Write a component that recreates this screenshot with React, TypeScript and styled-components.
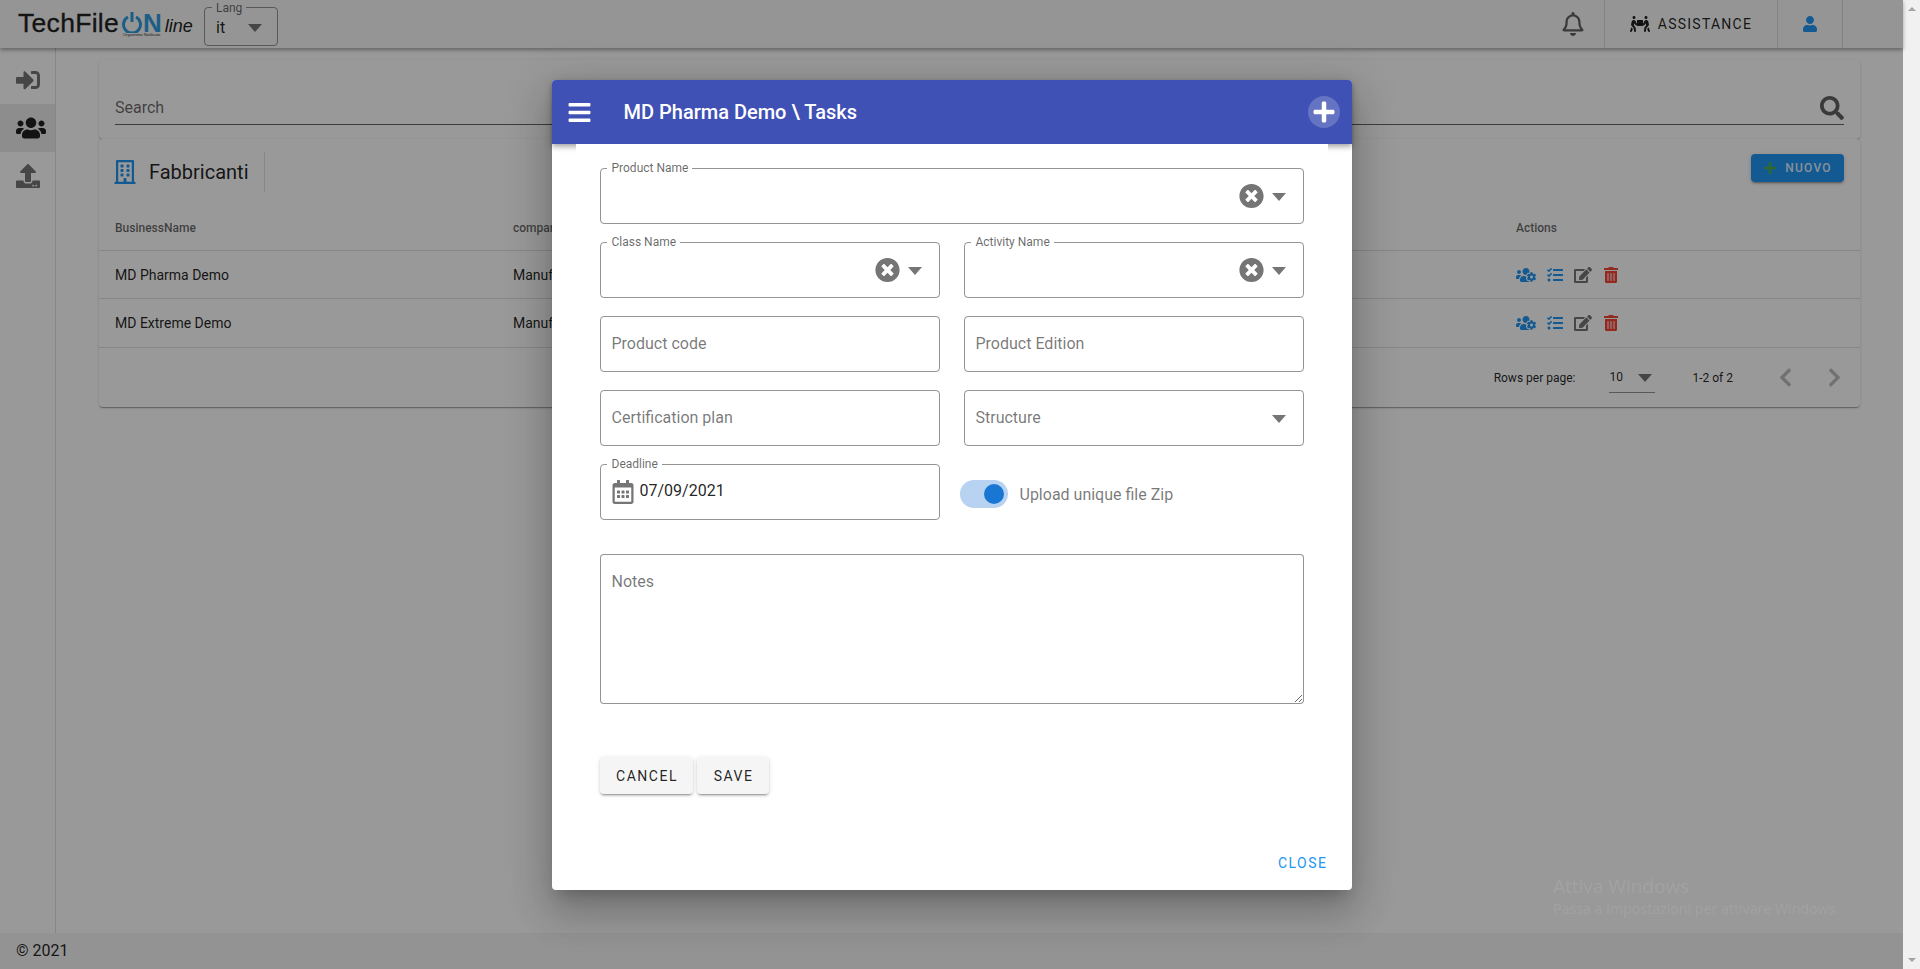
import React from 'react'
import styled, { createGlobalStyle } from 'styled-components'
import {
  FaBars,
  FaChevronLeft,
  FaChevronRight,
  FaEdit,
  FaPeopleCarry,
  FaPlus,
  FaRegBell,
  FaRegBuilding,
  FaRegCalendarAlt,
  FaSearch,
  FaSignInAlt,
  FaTasks,
  FaTimesCircle,
  FaTrashAlt,
  FaUpload,
  FaUser,
  FaUsers,
  FaUsersCog,
} from 'react-icons/fa'

const GlobalStyle = createGlobalStyle`
  html, body {
    margin: 0;
    height: 100%;
    overflow: hidden;
    background: #fff;
    font-family: Roboto, "Liberation Sans", sans-serif;
    color: rgba(0, 0, 0, 0.87);
  }
  * { box-sizing: border-box; }
`

const Screen = styled.div`
  display: flex;
  width: 1920px;
  height: 969px;
`

const Page = styled.div`
  position: relative;
  flex: 1;
  min-width: 0;
  display: flex;
  flex-direction: column;
`

const Scrollbar = styled.div`
  width: 17px;
  background: #f1f1f1;
  display: flex;
  flex-direction: column;
  justify-content: space-between;
  align-items: center;
  padding: 7px 0;
`

const ScrollArrow = styled.span<{ $down?: boolean }>`
  width: 0;
  height: 0;
  border-left: 4px solid transparent;
  border-right: 4px solid transparent;
  ${({ $down }) => ($down ? 'border-top: 4px solid #a3a3a3;' : 'border-bottom: 4px solid #a3a3a3;')}
`

/* top bar */
const TopBar = styled.header`
  position: relative;
  z-index: 2;
  flex: none;
  height: 48px;
  background: #f9f9f9;
  box-shadow: 0 2px 4px rgba(0, 0, 0, 0.35);
  display: flex;
  align-items: stretch;
  padding-left: 18px;
`

const Logo = styled.div`
  position: relative;
  width: 176px;
  display: flex;
  align-items: baseline;
  padding-top: 11px;
  white-space: nowrap;
`

const LogoTech = styled.span`
  font-family: "Liberation Sans", Arial, sans-serif;
  font-size: 26.5px;
  line-height: 24px;
  letter-spacing: 0.3px;
  color: #222;
  -webkit-text-stroke: 0.3px #222;
`

const LogoOn = styled.span`
  font-family: "Liberation Sans", Arial, sans-serif;
  font-size: 26px;
  font-weight: 700;
  line-height: 18px;
  color: #2f9fe0;
  margin-left: 1px;
`

const LogoLine = styled.span`
  font-family: "Liberation Sans", Arial, sans-serif;
  font-style: italic;
  font-size: 18px;
  line-height: 18px;
  color: #222;
  margin-left: 3px;
`

const PowerMark = styled.svg`
  width: 20px;
  height: 21px;
  margin-left: 3px;
  align-self: flex-start;
  margin-top: 1px;
`

const LogoSub = styled.span`
  position: absolute;
  left: 105px;
  top: 33px;
  font-family: "Liberation Sans", Arial, sans-serif;
  font-size: 4px;
  line-height: 4px;
  color: #333;
`

const LangBox = styled.div`
  position: relative;
  width: 74px;
  height: 39px;
  margin: 7px 0 0 10px;
  border: 1px solid rgba(0, 0, 0, 0.4);
  border-radius: 4px;
  padding: 10px 0 0 11px;
  font-size: 16px;
  line-height: 20px;
  color: rgba(0, 0, 0, 0.87);
`

const LangLabel = styled.span`
  position: absolute;
  left: 7px;
  top: -6px;
  padding: 0 4px;
  background: #f9f9f9;
  font-size: 12px;
  line-height: 13px;
  color: rgba(0, 0, 0, 0.6);
`

const Caret = styled.svg<{ $right: number; $top?: string }>`
  position: absolute;
  right: ${({ $right }) => $right}px;
  top: ${({ $top }) => $top || 'calc(50% + 1px)'};
  width: 14px;
  height: 8px;
  fill: #757575;
  transform: translateY(-50%);
`

const TopBarRight = styled.div`
  margin-left: auto;
  display: flex;
  align-items: stretch;
  padding-right: 60px;
`

const BarCell = styled.div<{ $width: number; $size?: number; $color?: string }>`
  width: ${({ $width }) => $width}px;
  display: flex;
  align-items: center;
  justify-content: center;
  gap: 8px;
  border-right: 1px solid rgba(0, 0, 0, 0.12);
  font-size: ${({ $size }) => $size || 14}px;
  letter-spacing: 1.25px;
  color: ${({ $color }) => $color || 'rgba(0, 0, 0, 0.87)'};
`

const Body = styled.div`
  flex: 1;
  min-height: 0;
  display: flex;
`

/* left rail */
const Rail = styled.nav`
  flex: none;
  width: 56px;
  padding-top: 8px;
  border-right: 1px solid rgba(0, 0, 0, 0.12);
`

const RailItem = styled.div<{ $active?: boolean }>`
  height: 48px;
  display: flex;
  align-items: center;
  padding-left: 16px;
  font-size: 24px;
  color: ${({ $active }) => ($active ? '#212121' : '#757575')};
  background: ${({ $active }) => ($active ? 'rgba(0, 0, 0, 0.08)' : 'transparent')};
`

const Content = styled.main`
  flex: 1;
  min-width: 0;
  padding: 12px 43px 0;
`

const Paper = styled.section`
  background: #fff;
  border-radius: 4px;
  box-shadow: 0 2px 1px -1px rgba(0, 0, 0, 0.2), 0 1px 1px 0 rgba(0, 0, 0, 0.14), 0 1px 3px 0 rgba(0, 0, 0, 0.12);
`

const SearchPaper = styled(Paper)`
  height: 79px;
  padding: 0 16px;
  display: flex;
  align-items: flex-start;
`

const SearchField = styled.div`
  width: 100%;
  height: 32px;
  margin-top: 33px;
  padding-bottom: 2px;
  border-bottom: 1px solid rgba(0, 0, 0, 0.6);
  display: flex;
  justify-content: space-between;
  align-items: center;
  font-size: 16px;
  color: rgba(0, 0, 0, 0.6);
`

const TablePaper = styled(Paper)`
  height: 268px;
`

const TitleBar = styled.div`
  height: 68px;
  padding: 13px 16px 0 14px;
  display: flex;
  align-items: flex-start;
  justify-content: space-between;
`

const Title = styled.div`
  display: flex;
  align-items: center;
  height: 40px;
  font-size: 20px;
  padding-right: 15px;
  border-right: 1px solid rgba(0, 0, 0, 0.12);
  color: rgba(0, 0, 0, 0.87);
  gap: 12px;
`

const NewButton = styled.button`
  width: 93px;
  height: 28px;
  margin-top: 2px;
  border: 0;
  border-radius: 4px;
  background: #2196f3;
  color: rgba(255, 255, 255, 0.87);
  font: 500 12px Roboto, sans-serif;
  letter-spacing: 1.25px;
  display: flex;
  align-items: center;
  justify-content: center;
  gap: 8px;
  box-shadow: 0 3px 1px -2px rgba(0, 0, 0, 0.2), 0 2px 2px 0 rgba(0, 0, 0, 0.14), 0 1px 5px 0 rgba(0, 0, 0, 0.12);
`

const Row = styled.div<{ $height: number; $head?: boolean }>`
  height: ${({ $height }) => $height}px;
  display: grid;
  grid-template-columns: 398px 1003px 1fr;
  align-items: center;
  padding: ${({ $head }) => ($head ? '0 0 2px 16px' : '0 0 0 16px')};
  border-bottom: 1px solid rgba(0, 0, 0, 0.12);
  font-size: ${({ $head }) => ($head ? '12px' : '14px')};
  font-weight: ${({ $head }) => ($head ? 500 : 400)};
  color: ${({ $head }) => ($head ? 'rgba(0, 0, 0, 0.6)' : 'rgba(0, 0, 0, 0.87)')};
`

const Actions = styled.div`
  display: flex;
  align-items: center;
  gap: 11px;
`

const ActionIcon = styled.span<{ $color: string; $size: number }>`
  display: flex;
  color: ${({ $color }) => $color};
  font-size: ${({ $size }) => $size}px;
`

const Pager = styled.div`
  height: 59px;
  display: flex;
  align-items: center;
  justify-content: flex-end;
  font-size: 12px;
  color: rgba(0, 0, 0, 0.87);
`

const PageSize = styled.div`
  position: relative;
  width: 46px;
  height: 30px;
  margin: 0 37px 0 34px;
  line-height: 28px;
  border-bottom: 1px solid rgba(0, 0, 0, 0.42);
`

const PagerArrow = styled.span<{ $gap: number }>`
  display: flex;
  margin-left: ${({ $gap }) => $gap}px;
  font-size: 21px;
  color: rgba(0, 0, 0, 0.26);
`

const PagerEnd = styled.span`
  width: 15px;
`

const SiteFooter = styled.footer`
  position: absolute;
  left: 0;
  right: 0;
  bottom: 0;
  height: 36px;
  background: #f5f5f5;
  display: flex;
  align-items: center;
  padding: 0 0 2px 16px;
  font-size: 16px;
  color: rgba(0, 0, 0, 0.87);
`

/* dialog */
const Backdrop = styled.div`
  position: absolute;
  inset: 0;
  z-index: 10;
  background: rgba(0, 0, 0, 0.4);
  display: flex;
  justify-content: center;
  align-items: flex-start;
  padding-top: 80px;
`

const Dialog = styled.div`
  width: 800px;
  height: 810px;
  display: flex;
  flex-direction: column;
  background: #fff;
  border-radius: 4px;
  box-shadow: 0 11px 15px -7px rgba(0, 0, 0, 0.2), 0 24px 38px 3px rgba(0, 0, 0, 0.14), 0 9px 46px 8px rgba(0, 0, 0, 0.12);
`

const DialogBar = styled.div`
  flex: none;
  height: 64px;
  background: #3f51b5;
  border-radius: 4px 4px 0 0;
  color: #fff;
  display: flex;
  align-items: center;
  padding: 0 12px 0 15px;
  font-size: 20px;
  font-weight: 500;
  box-shadow: 0 2px 4px -1px rgba(0, 0, 0, 0.2), 0 4px 5px 0 rgba(0, 0, 0, 0.14), 0 1px 10px 0 rgba(0, 0, 0, 0.12);
`

const DialogTitle = styled.span`
  margin-left: 32px;
  flex: 1;
`

const PlusWrap = styled.span`
  width: 32px;
  height: 32px;
  border-radius: 50%;
  background: rgba(255, 255, 255, 0.2);
  display: flex;
  align-items: center;
  justify-content: center;
  font-size: 24px;
`

const DialogContent = styled.div`
  position: relative;
  flex: 1;
  margin: 0 24px;
  padding: 24px 24px 0;
  background: #fff;
`

const FormGrid = styled.div`
  display: grid;
  grid-template-columns: 340px 340px;
  column-gap: 24px;
  row-gap: 18px;
`

const Field = styled.div<{ $wide?: boolean }>`
  position: relative;
  height: 56px;
  grid-column: ${({ $wide }) => ($wide ? '1 / 3' : 'auto')};
  border: 1px solid rgba(0, 0, 0, 0.42);
  border-radius: 4px;
  display: flex;
  align-items: center;
  padding: 0 0 2px 11px;
  font-size: 16px;
  color: rgba(0, 0, 0, 0.54);
`

const FieldLabel = styled.span`
  position: absolute;
  left: 6px;
  top: -8px;
  padding: 0 4px 0 5px;
  background: #fff;
  font-size: 12px;
  line-height: 14px;
  color: rgba(0, 0, 0, 0.6);
`

const ClearIcon = styled.span`
  position: absolute;
  right: 39px;
  top: 50%;
  transform: translateY(-50%);
  display: flex;
  font-size: 25px;
  color: #757575;
`

const DateValue = styled.span`
  display: flex;
  align-items: center;
  gap: 5px;
  margin-top: -1px;
  color: rgba(0, 0, 0, 0.87);
`

const CalendarIcon = styled.span`
  display: flex;
  font-size: 24px;
  color: #757575;
  margin-top: 3px;
  margin-left: -1px;
`

const SwitchRow = styled.div`
  display: flex;
  align-items: center;
  margin-left: -4px;
  margin-top: 4px;
  gap: 12px;
  font-size: 16px;
  color: rgba(0, 0, 0, 0.54);
`

const SwitchTrack = styled.span`
  width: 48px;
  height: 28px;
  border-radius: 14px;
  background: #b7d3f1;
  display: flex;
  align-items: center;
  justify-content: flex-end;
  padding-right: 4px;
`

const SwitchThumb = styled.span`
  width: 20px;
  height: 20px;
  border-radius: 50%;
  background: #1976d2;
`

const Notes = styled.textarea`
  display: block;
  width: 704px;
  height: 150px;
  margin-top: 34px;
  padding: 17px 11px;
  border: 1px solid rgba(0, 0, 0, 0.42);
  border-radius: 4px;
  outline: none;
  resize: vertical;
  font: 400 16px Roboto, sans-serif;
  &::placeholder {
    color: rgba(0, 0, 0, 0.54);
    opacity: 1;
  }
`

const FormButtons = styled.div`
  display: flex;
  gap: 4px;
  margin-top: 53px;
`

const FormButton = styled.button<{ $width: number }>`
  width: ${({ $width }) => $width}px;
  height: 37px;
  padding: 0 0 0 2px;
  border: 0;
  border-radius: 4px;
  background: #f5f5f5;
  color: rgba(0, 0, 0, 0.87);
  font: 400 14px Roboto, sans-serif;
  letter-spacing: 1.5px;
  box-shadow: 0 3px 1px -2px rgba(0, 0, 0, 0.2), 0 2px 2px 0 rgba(0, 0, 0, 0.14), 0 1px 5px 0 rgba(0, 0, 0, 0.12);
`

const CloseButton = styled.span`
  position: absolute;
  right: 0;
  bottom: 19px;
  font-size: 14px;
  font-weight: 400;
  letter-spacing: 1.5px;
  color: #2196f3;
`

/* windows activation text, sits on top of everything */
const Watermark = styled.div`
  position: absolute;
  z-index: 20;
  left: 1553px;
  top: 873px;
  font-family: "Open Sans", sans-serif;
  color: rgba(255, 255, 255, 0.1);
  pointer-events: none;
  white-space: nowrap;
`

const WatermarkTitle = styled.div`
  font-size: 19px;
  line-height: 26px;
`

const WatermarkText = styled.div`
  font-size: 14.2px;
  line-height: 20px;
`

const ArrowDown: React.FC<{ right: number; top?: string }> = ({ right, top }) => (
  <Caret $right={right} $top={top} viewBox="0 0 14 8">
    <polygon points="0,0 14,0 7,8" />
  </Caret>
)

const TableRowActions = () => (
  <Actions>
    <ActionIcon $color="#2196f3" $size={20}><FaUsersCog /></ActionIcon>
    <ActionIcon $color="#2196f3" $size={16}><FaTasks /></ActionIcon>
    <ActionIcon $color="#757575" $size={18}><FaEdit /></ActionIcon>
    <ActionIcon $color="#f44336" $size={16}><FaTrashAlt /></ActionIcon>
  </Actions>
)

const rows = ['MD Pharma Demo', 'MD Extreme Demo']

const App: React.FC = () => (
  <Screen>
    <GlobalStyle />
    <Page>
      <TopBar>
        <Logo>
          <LogoTech>TechFile</LogoTech>
          <PowerMark viewBox="0 0 20 21" fill="none" stroke="#2f9fe0" strokeWidth="3">
            <path d="M6 5a8.5 8.5 0 1 0 8 0" />
            <path d="M10 0v10" />
          </PowerMark>
          <LogoOn>N</LogoOn>
          <LogoLine>line</LogoLine>
          <LogoSub>Organismo Notificato</LogoSub>
        </Logo>
        <LangBox>
          <LangLabel>Lang</LangLabel>
          it
          <ArrowDown right={15} top="20px" />
        </LangBox>
        <TopBarRight>
          <BarCell $width={64} $size={24} $color="#616161"><FaRegBell /></BarCell>
          <BarCell $width={173}>
            <FaPeopleCarry size={20} />
            ASSISTANCE
          </BarCell>
          <BarCell $width={65} $size={16} $color="#2196f3"><FaUser /></BarCell>
        </TopBarRight>
      </TopBar>
      <Body>
        <Rail>
          <RailItem><FaSignInAlt /></RailItem>
          <RailItem $active><FaUsers size={30} /></RailItem>
          <RailItem><FaUpload /></RailItem>
        </Rail>
        <Content>
          <SearchPaper>
            <SearchField>
              Search
              <FaSearch size={24} color="#616161" />
            </SearchField>
          </SearchPaper>
          <TablePaper>
            <TitleBar>
              <Title>
                <FaRegBuilding size={24} color="#2196f3" />
                Fabbricanti
              </Title>
              <NewButton>
                <FaPlus size={14} color="#4caf50" />
                NUOVO
              </NewButton>
            </TitleBar>
            <Row $head $height={44}>
              <span>BusinessName</span>
              <span>companyType</span>
              <span>Actions</span>
            </Row>
            {rows.map((name) => (
              <Row key={name} $height={name === rows[0] ? 48 : 49}>
                <span>{name}</span>
                <span>Manufacturer</span>
                <TableRowActions />
              </Row>
            ))}
            <Pager>
              Rows per page:
              <PageSize>
                10
                <ArrowDown right={3} top="15px" />
              </PageSize>
              1-2 of 2
              <PagerArrow $gap={42}><FaChevronLeft /></PagerArrow>
              <PagerArrow $gap={28}><FaChevronRight /></PagerArrow>
              <PagerEnd />
            </Pager>
          </TablePaper>
        </Content>
      </Body>
      <SiteFooter>© 2021</SiteFooter>
      <Backdrop>
        <Dialog>
          <DialogBar>
            <FaBars size={25} />
            <DialogTitle>MD Pharma Demo \ Tasks</DialogTitle>
            <PlusWrap><FaPlus /></PlusWrap>
          </DialogBar>
          <DialogContent>
            <FormGrid>
              <Field $wide>
                <FieldLabel>Product Name</FieldLabel>
                <ClearIcon><FaTimesCircle /></ClearIcon>
                <ArrowDown right={17} />
              </Field>
              <Field>
                <FieldLabel>Class Name</FieldLabel>
                <ClearIcon><FaTimesCircle /></ClearIcon>
                <ArrowDown right={17} />
              </Field>
              <Field>
                <FieldLabel>Activity Name</FieldLabel>
                <ClearIcon><FaTimesCircle /></ClearIcon>
                <ArrowDown right={17} />
              </Field>
              <Field>Product code</Field>
              <Field>Product Edition</Field>
              <Field>Certification plan</Field>
              <Field>
                Structure
                <ArrowDown right={17} />
              </Field>
              <Field>
                <FieldLabel>Deadline</FieldLabel>
                <DateValue>
                  <CalendarIcon><FaRegCalendarAlt /></CalendarIcon>
                  07/09/2021
                </DateValue>
              </Field>
              <SwitchRow>
                <SwitchTrack><SwitchThumb /></SwitchTrack>
                Upload unique file Zip
              </SwitchRow>
            </FormGrid>
            <Notes placeholder="Notes" readOnly />
            <FormButtons>
              <FormButton $width={93}>CANCEL</FormButton>
              <FormButton $width={72}>SAVE</FormButton>
            </FormButtons>
            <CloseButton>CLOSE</CloseButton>
          </DialogContent>
        </Dialog>
      </Backdrop>
      <Watermark>
        <WatermarkTitle>Attiva Windows</WatermarkTitle>
        <WatermarkText>Passa a Impostazioni per attivare Windows.</WatermarkText>
      </Watermark>
    </Page>
    <Scrollbar>
      <ScrollArrow />
      <ScrollArrow $down />
    </Scrollbar>
  </Screen>
)

export default App
